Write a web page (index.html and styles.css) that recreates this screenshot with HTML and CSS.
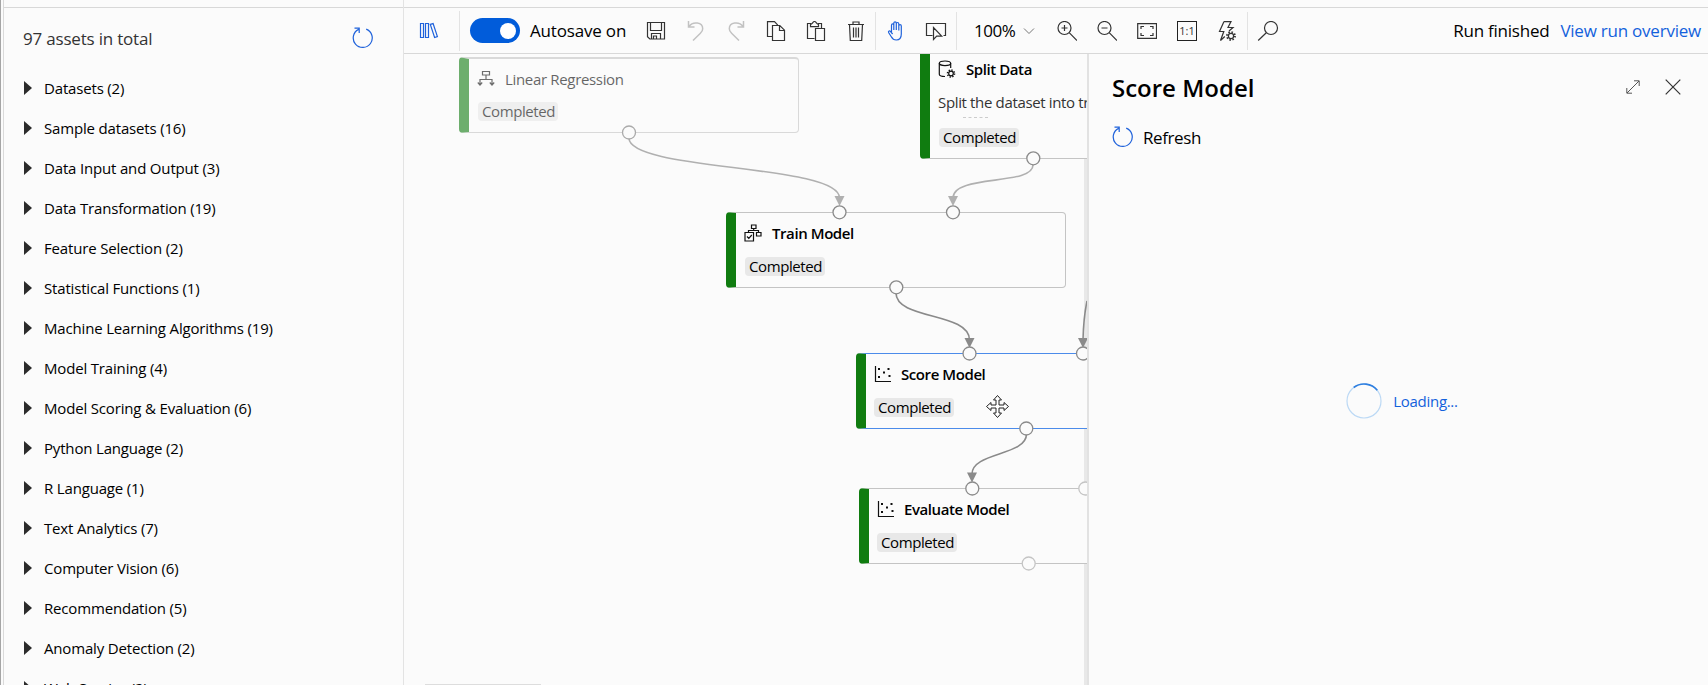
FILE: index.html
```html
<!DOCTYPE html>
<html lang="en">
<head>
<meta charset="utf-8">
<title>Designer</title>
<link rel="stylesheet" href="styles.css">
</head>
<body>
<svg class="defs" width="0" height="0">
  <symbol id="refresh" viewBox="0 0 22 22"><path d="M14.2 2.1a9.5 9.5 0 1 1-7.600.3M2.500 1.200h4.700v4.700"/></symbol>
  <symbol id="scatter" viewBox="0 0 18 18"><path d="M1.500 1v15.500H17"/><path class="dots" d="M4 3h2v2H4zM13.500 3h2v2h-2zM9 6.500h2v2H9zM4 11h2v2H4zM14.500 10h2v2h-2z"/></symbol>
</svg>
<div class="app">
  <aside class="sidebar">
    <div class="assets-head">
      <span>97 assets in total</span>
      <svg class="blue" width="22" height="22"><use href="#refresh"/></svg>
    </div>
    <ul class="tree">
      <li>Datasets (2)</li>
      <li>Sample datasets (16)</li>
      <li>Data Input and Output (3)</li>
      <li>Data Transformation (19)</li>
      <li>Feature Selection (2)</li>
      <li>Statistical Functions (1)</li>
      <li>Machine Learning Algorithms (19)</li>
      <li>Model Training (4)</li>
      <li>Model Scoring &amp; Evaluation (6)</li>
      <li>Python Language (2)</li>
      <li>R Language (1)</li>
      <li>Text Analytics (7)</li>
      <li>Computer Vision (6)</li>
      <li>Recommendation (5)</li>
      <li>Anomaly Detection (2)</li>
      <li>Web Service (2)</li>
    </ul>
  </aside>
  <main class="main">
    <div class="toolbar">
      <div class="group lib">
        <svg class="blue" width="20" height="20" viewBox="0 0 20 20"><path d="M1.500 2.500h3v14h-3zM6.500 2.500h3v14h-3zM11.300 3.400l2.800-.8 4.300 13-2.800.9z"/></svg>
      </div>
      <div class="group save">
        <span class="toggle"></span><span class="toggle-label">Autosave on</span>
      </div>
      <div class="group edit">
        <span class="btn"><svg viewBox="0 0 20 20"><path d="M1.500 1.500h17v16.500H3.800L1.500 15.800zM4.500 1.500v8h11v-8M5.500 18v-5.500h9V18M7.500 18v-3h3v3"/></svg></span>
        <span class="btn off"><svg viewBox="0 0 20 20"><path d="M2.500 0v6h6M2.800 5.700C7-.3 16.700 1.300 16.700 7.700c0 2.300-1.100 3.300-2.300 4.500L7 19.500"/></svg></span>
        <span class="btn off"><svg viewBox="0 0 20 20"><path d="M17.500 0v6h-6M17.200 5.700C13-.3 3.300 1.300 3.300 7.700c0 2.300 1.100 3.300 2.300 4.500l7.400 7.300"/></svg></span>
        <span class="btn"><svg viewBox="0 0 20 20"><path d="M6 15.500H1.500V.7h7l3.300 3.500M6.500 4.500h7.300l4.700 4.700v10.300h-12zM13.500 4.500v5h5"/></svg></span>
        <span class="btn"><svg viewBox="0 0 20 20"><path d="M8.500 17.500h-7v-15h3v3.200h8V2.500h3v5M4.500 3.500c2 0 2.200-3 4-3s2 3 4 3M9.500 7.500h9v12h-9z"/></svg></span>
        <span class="btn"><svg viewBox="0 0 20 20"><path d="M2 3.500h16M7 3.500v-2.500h6v2.500M3.500 3.500l.8 16h11.400l.8-16M7.500 6.500v10M10 6.500v10M12.500 6.500v10"/></svg></span>
      </div>
      <div class="group">
        <span class="btn blue"><svg viewBox="0 0 20 20"><path d="M5.500 11V4.200c0-1.700 2.300-1.700 2.300 0V9M7.800 4V2.200c0-1.900 2.500-1.900 2.500 0V9M10.300 3c0-2 2.500-2 2.500 0v6.500M12.800 5c0-1.800 2.500-1.800 2.500 0v8c0 4-2 6-5 6-2.500 0-4-1.200-5-3.200L2.600 11.500c-.6-1.500 1-2.300 2-.9l2 2.400"/></svg></span>
        <span class="btn"><svg class="wide" viewBox="0 0 22 20"><path d="M7.500 14.500h-6v-12h19v12h-2M8.500 6.500v12l3.200-3.300h5z"/></svg></span>
      </div>
      <div class="group zoom">
        <span class="pct">100%</span>
        <svg class="chev" width="12" height="8" viewBox="0 0 12 8"><path d="M1 1.500l5 5 5-5"/></svg>
        <span class="btn"><svg viewBox="0 0 20 20"><circle cx="7.500" cy="7" r="6.500"/><path d="M12.200 11.700L20 19.500M4.500 7h6M7.500 4v6"/></svg></span>
        <span class="btn"><svg viewBox="0 0 20 20"><circle cx="7.500" cy="7" r="6.500"/><path d="M12.200 11.700L20 19.500M4.500 7h6"/></svg></span>
        <span class="btn"><svg viewBox="0 0 20 20"><path d="M.7 2.700h18.800v14.600H.7zM4 8V5.500h3M13 5.500h3V8M16 12v2.500h-3M7 14.500H4V12"/></svg></span>
        <span class="btn"><span class="ratio">1:1</span></span>
        <span class="btn"><svg viewBox="0 0 20 20"><path d="M7 .6h7l-3 5.900h5M7 .6L2.500 10.500h4.300L3.500 19.500l4.300-4M11 6.500h5l-4 3.500"/><circle cx="14" cy="15" r="2.600"/><path stroke-dasharray="1.500 1.640" stroke-width="1.800" d="M18 15a4 4 0 1 1-8 0 4 4 0 1 1 8 0"/></svg></span>
      </div>
      <span class="btn"><svg class="wide" viewBox="0 0 22 20"><circle cx="14" cy="7" r="6.500"/><path d="M9.300 11.700L1.200 19.500"/></svg></span>
      <div class="run"><span>Run finished</span><a>View run overview</a></div>
    </div>
    <div class="work">
      <div class="canvas">
        <span class="guide"></span>
        <svg class="edges" width="684" height="631" viewBox="404 54 684 631">
          <g class="light">
            <path d="M629 138C629 171 839.500 164 839.500 198"/><path class="tip" d="M834.500 196h10l-5 10z"/>
            <path d="M1033 165C1033 186 953 174 953 198"/><path class="tip" d="M948 196h10l-5 10z"/>
          </g>
          <g class="dark">
            <path d="M896 293C896 320 969.500 312 969.500 340"/><path class="tip" d="M964.500 338h10l-5 10z"/>
            <path d="M1087 301Q1083.500 318 1083 340"/><path class="tip" d="M1078 338h10l-5 10z"/>
            <path d="M1026.500 434C1026.500 456 972 452 972 474"/><path class="tip" d="M967 472.500h10l-5 10z"/>
          </g>
        </svg>
        <article class="node linear">
          <h3><svg width="18" height="18" viewBox="0 0 18 18"><path d="M5.500 1.500h7v3.500h-7zM9 5v4.500M3 14.500v-5h12v5M.8 12.500L3 15l2.200-2.500M12.800 12.500L15 15l2.200-2.500"/></svg>Linear Regression</h3>
          <span class="state">Completed</span>
        </article>
        <article class="node split">
          <h3><svg width="18" height="18" viewBox="0 0 18 18"><ellipse cx="7" cy="3.300" rx="5.700" ry="2.300"/><path d="M1.300 3.300v11c0 1.500 2.500 2.200 5.700 2.200M12.700 3.300V8"/><circle cx="13" cy="13.500" r="2.300"/><path stroke-dasharray="1.300 1.440" stroke-width="1.600" d="M16.500 13.500a3.500 3.500 0 1 1-7 0 3.500 3.500 0 1 1 7 0"/></svg>Split Data</h3>
          <p>Split the dataset into train</p>
          <span class="cut"></span>
          <span class="state">Completed</span>
        </article>
        <article class="node train">
          <h3><svg width="18" height="18" viewBox="0 0 18 18"><path d="M7.500 1h4.500v3.500H7.500zM12.500 8.500H17v3.500h-4.500zM1 8.500h8.500V17H1zM9.700 4.500V6.500M4.500 8.500v-2h10v2M3 12.500l1.800 1.800 3-3.300"/></svg>Train Model</h3>
          <span class="state">Completed</span>
        </article>
        <article class="node score">
          <h3><svg width="18" height="18"><use href="#scatter"/></svg>Score Model</h3>
          <span class="state">Completed</span>
        </article>
        <article class="node evaluate">
          <h3><svg width="18" height="18"><use href="#scatter"/></svg>Evaluate Model</h3>
          <span class="state">Completed</span>
        </article>
        <svg class="edges" width="684" height="631" viewBox="404 54 684 631">
          <g class="ports">
            <circle class="dim" cx="629" cy="132.500" r="6.500"/>
            <circle cx="1033.300" cy="158.300" r="6.500"/><circle cx="839.500" cy="212.300" r="6.500"/><circle cx="953" cy="212.300" r="6.500"/>
            <circle cx="896.300" cy="287.300" r="6.500"/><circle cx="969.500" cy="353.500" r="6.500"/><circle cx="1083" cy="353.500" r="6.500"/>
            <circle cx="1026.300" cy="428.500" r="6.500"/><circle cx="972.300" cy="488.500" r="6.500"/>
            <circle class="free" cx="1085.300" cy="488.500" r="6.500"/><circle class="free" cx="1028.700" cy="563.500" r="6.500"/>
          </g>
          <path class="cursor" d="M997.500 395.500l4 4.500h-2.500v5h5v-2.500l4.500 4-4.500 4v-2.500h-5v5h2.500l-4 4.500-4-4.500h2.500v-5h-5v2.500l-4.500-4 4.500-4v2.500h5v-5h-2.500z"/>
        </svg>
        <span class="minimap"></span>
      </div>
      <section class="panel">
        <header>
          <h2>Score Model</h2>
          <svg class="expand" width="14" height="14" viewBox="0 0 14 14"><path d="M1 13L13 1M8 .8h5.200V6M.8 8v5.200H6"/></svg>
          <svg class="close" width="16" height="16" viewBox="0 0 16 16"><path d="M.7.700l14.600 14.600M15.300.700L.7 15.300"/></svg>
        </header>
        <div class="refresh"><svg class="blue" width="22" height="22"><use href="#refresh"/></svg>Refresh</div>
        <div class="loading">
          <svg width="36" height="36" viewBox="0 0 36 36"><circle cx="18" cy="18" r="17"/><path d="M7.700 4.500a17 17 0 0 1 23.600 2.800"/></svg>
          <span>Loading...</span>
        </div>
      </section>
    </div>
  </main>
</div>
</body>
</html>
```
FILE: styles.css
```css
* { box-sizing: border-box; }
body { margin: 0; background: #fbfbfb; color: #000; font-family: "Open Sans", "Noto Sans", sans-serif; overflow: hidden; }
h2, h3, p, ul { margin: 0; padding: 0; }
svg { display: block; flex: none; fill: none; stroke: #333; stroke-width: 1.2; }
.defs { position: absolute; }
.blue, .blue svg { stroke: #1f62db; }
.app { display: flex; height: 685px; border-left: 1px solid #a5a5a5; padding-left: 2px; }

.sidebar { width: 401px; border-left: 1px solid #dadada; border-right: 1px solid #e3e3e3; overflow: hidden; padding-top: 7px; }
.assets-head { display: flex; justify-content: space-between; align-items: center; height: 61px; border-top: 1px solid #d8d8d8; padding: 0 29px 0 19px; font-size: 17px; letter-spacing: -.2px; color: #333; }
.assets-head svg { margin-bottom: 1px; }
.tree { list-style: none; font-size: 15px; letter-spacing: -.17px; }
.tree li { display: flex; align-items: center; height: 40px; gap: 12px; padding-left: 20px; white-space: nowrap; }
.tree li::before { content: ""; border-left: 8px solid #2b2b2b; border-top: 7px solid transparent; border-bottom: 7px solid transparent; }

.main { flex: 1; min-width: 0; display: flex; flex-direction: column; padding-top: 7px; }
.toolbar { display: flex; align-items: center; height: 47px; border-top: 1px solid #d8d8d8; border-bottom: 1px solid #d8d8d8; flex: none; font-size: 17px; }
.group { display: flex; align-items: center; height: 38px; border-right: 1px solid #e3e3e3; }
.lib { width: 56px; height: 40px; padding-left: 15px; }
.save { border: 0; width: 176px; padding-left: 10px; }
.edit { width: 240px; }
.toggle { width: 50px; height: 25px; border-radius: 13px; background: #015cda; display: flex; justify-content: flex-end; align-items: center; padding-right: 4px; }
.toggle::after { content: ""; width: 16px; height: 16px; border-radius: 50%; background: #fff; }
.toggle-label { margin-left: 10px; letter-spacing: -.18px; white-space: nowrap; }
.btn { width: 40px; flex: none; display: flex; justify-content: center; }
.btn svg { width: 20px; height: 20px; }
.btn svg.wide { width: 22px; }
.off svg { stroke: #c2c2c2; stroke-width: 1.5; }
.zoom { width: 291px; padding-left: 17px; }
.pct { width: 49px; letter-spacing: -.45px; }
.chev { margin-right: 12px; stroke: #777; stroke-width: 1; }
.ratio { width: 20px; height: 20px; border: 1px solid #222; font-size: 11px; line-height: 18px; text-align: center; color: #333; }
.run { margin-left: auto; padding-right: 7px; display: flex; gap: 11px; letter-spacing: -.23px; white-space: nowrap; }
.run a { color: #1361dc; }

.work { flex: 1; min-height: 0; display: flex; }
.canvas { position: relative; width: 683px; flex: none; overflow: hidden; }
.edges { position: absolute; left: 0; top: 0; stroke-width: 1.6; }
.light { stroke: #b0b0b0; }
.dark { stroke: #8a8a8a; }
.tip { stroke: none; }
.light .tip { fill: #b0b0b0; }
.dark .tip { fill: #8a8a8a; }
.ports circle { fill: #fbfbfb; stroke: #8a8a8a; stroke-width: 1.3; }
.ports .dim { stroke: #aaa; }
.ports .free { stroke: #c4c4c4; }
.cursor { fill: #fff; stroke: #222; stroke-width: 1; }
.guide { position: absolute; left: 680px; top: 104px; bottom: 0; width: 3px; background: #e8e8e8; }
.minimap { position: absolute; left: 21px; bottom: 0; width: 116px; height: 1px; background: #ddd; }

.node { position: absolute; width: 340px; height: 76px; background: #fbfbfb; border: 1px solid #c4c4c4; border-left: 10px solid #107c10; border-radius: 4px; padding: 10px 0 0 8px; }
.node h3 { display: flex; align-items: center; height: 20px; font-size: 15px; font-weight: 550; letter-spacing: -.42px; white-space: nowrap; }
.node h3 svg { margin-right: 10px; stroke: #111; }
.node .dots, .dots { fill: #111; stroke: none; }
.state { display: block; width: 80px; height: 19px; margin-top: 14px; border-radius: 4px; background: #e8e8e8; padding-left: 4px; font-size: 15px; line-height: 19px; letter-spacing: -.4px; }
.train .state, .linear .state { margin-left: 1px; }
.linear { left: 55px; top: 3px; opacity: .6; border-top-width: 2px; }
.linear .state { margin-top: 13px; }
.linear h3 { font-weight: 500; letter-spacing: -.33px; }
.split { left: 516px; top: -17px; height: 122px; padding-top: 21px; }
.split p { margin-top: 11px; height: 24px; font-size: 15px; line-height: 24px; letter-spacing: -.35px; color: #333; white-space: nowrap; }
.split .cut { display: block; width: 25px; margin: 3px 0 0 25px; border-top: 1px dashed #ccc; }
.split .state { margin-top: 10px; margin-left: 1px; }
.train { left: 322px; top: 158px; }
.score { left: 452px; top: 299px; border-top-color: #4b8bea; border-bottom-color: #4b8bea; }
.evaluate { left: 455px; top: 434px; }
.score h3 svg, .evaluate h3 svg { margin-right: 9px; }

.panel { flex: 1; position: relative; border-left: 2px solid #e2e2e2; padding: 15px 19px 0 23px; }
.panel header { display: flex; align-items: center; height: 36px; }
.panel h2 { font-size: 24px; font-weight: 600; letter-spacing: 0; }
.expand { margin-left: auto; margin-right: 25px; stroke: #555; stroke-width: 1; }
.close { margin-right: 8px; }
.refresh { display: flex; align-items: center; height: 30px; gap: 9px; margin-top: 17px; font-size: 17px; letter-spacing: -.4px; }
.loading { display: flex; align-items: center; justify-content: center; gap: 11px; margin-top: 231px; padding-left: 3px; font-size: 15px; letter-spacing: -.3px; color: #1361dc; }
.loading circle { stroke: #bcd9f5; }
.loading path { stroke: #2f7fe0; stroke-width: 1.6; }
```
